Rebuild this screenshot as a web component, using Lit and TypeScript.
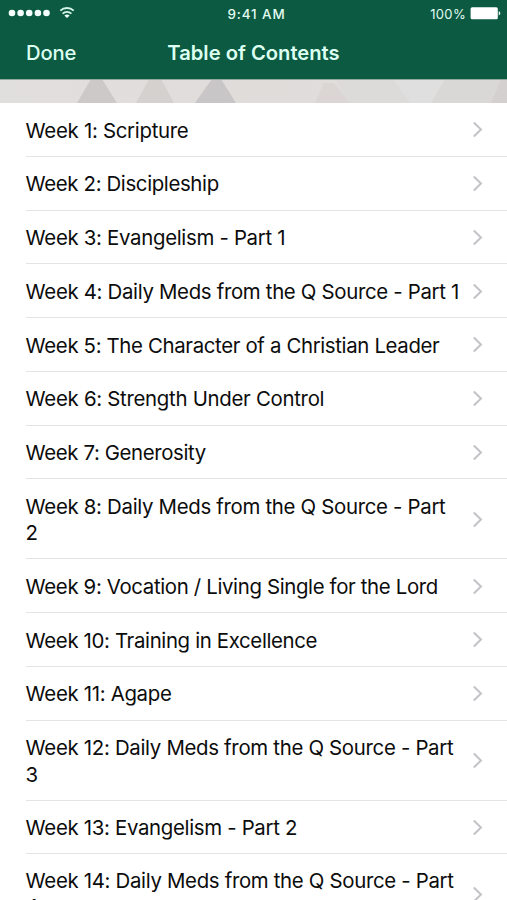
import { LitElement, html, css, svg } from "lit";
import { customElement, property } from "lit/decorators.js";

interface Chapter {
  label: string;
  tracking: number;
  leading?: number;
  inset?: number;
  twoLine?: boolean;
}

const chapters: Chapter[] = [
  { label: "Week 1: Scripture", tracking: -0.29 },
  { label: "Week 2: Discipleship", tracking: -0.36 },
  { label: "Week 3: Evangelism - Part 1", tracking: -0.31 },
  { label: "Week 4: Daily Meds from the Q Source - Part 1", tracking: -0.32 },
  { label: "Week 5: The Character of a Christian Leader", tracking: -0.35 },
  { label: "Week 6: Strength Under Control", tracking: -0.29 },
  { label: "Week 7: Generosity", tracking: -0.38 },
  { label: "Week 8: Daily Meds from the Q Source - Part\n2", tracking: -0.31, twoLine: true },
  { label: "Week 9: Vocation / Living Single for the Lord", tracking: -0.35 },
  { label: "Week 10: Training in Excellence", tracking: -0.35 },
  { label: "Week 11: Agape", tracking: -0.32 },
  { label: "Week 12: Daily Meds from the Q Source - Part\n3", tracking: -0.31, twoLine: true },
  { label: "Week 13: Evangelism - Part 2", tracking: -0.32 },
  { label: "Week 14: Daily Meds from the Q Source - Part\n4", tracking: -0.32, leading: 26, inset: 1, twoLine: true },
];

@customElement("status-bar")
export class StatusBar extends LitElement {
  static styles = css`
    :host {
      display: grid;
      grid-template-columns: 1fr auto 1fr;
      align-items: center;
      height: 26px;
      padding: 0 6px 0 8px;
      color: #e2fbf1;
      font-size: 13px;
    }
    .left,
    .right {
      display: flex;
      align-items: center;
    }
    .right {
      justify-content: flex-end;
      gap: 4px;
      letter-spacing: 0.35px;
    }
    .time {
      font-size: 13.4px;
      font-weight: 500;
      letter-spacing: 0.9px;
      padding: 2px 0 0 4px;
    }
    .percent {
      padding-top: 2px;
    }
    svg {
      display: block;
    }
  `;

  render() {
    return html`
      <div class="left">
        <svg width="70" height="26" viewBox="0 0 70 26">
          ${[4, 12.6, 21.2, 29.9, 38.5].map(
            (x) => svg`<circle cx=${x} cy="13" r="3.3" fill="#f4fffb"></circle>`
          )}
          <g fill="none" stroke="#d8f5e9" stroke-width="1.8">
            <path d="M52.3 10.7a9.6 9.6 0 0 1 13.4 0"></path>
            <path d="M54.6 13.6a6.3 6.3 0 0 1 8.8 0"></path>
          </g>
          <path d="M56.4 15.6a3.8 3.8 0 0 1 5.2 0L59 18.1z" fill="#f0fff9"></path>
        </svg>
      </div>
      <div class="time">9:41 AM</div>
      <div class="right">
        <span class="percent">100%</span>
        <svg width="31" height="26" viewBox="0 0 31 26">
          <rect x="0.6" y="7.3" width="27.2" height="12" rx="1.5" fill="#fff"></rect>
          <path d="M28.7 11.3c2.2.5 2.2 3.6 0 4.1z" fill="#e0f5ec"></path>
        </svg>
      </div>
    `;
  }
}

@customElement("chapter-row")
export class ChapterRow extends LitElement {
  @property({ attribute: false }) chapter!: Chapter;

  static styles = css`
    :host {
      display: block;
      padding-left: 25.6px;
    }
    .row {
      box-sizing: border-box;
      height: 53.75px;
      display: flex;
      align-items: center;
      justify-content: space-between;
      padding-right: 23px;
      border-bottom: 1px solid #e4e4e6;
    }
    .tall {
      height: 80px;
    }
    .label {
      font-size: 20.4px;
      color: #0c0c0c;
      white-space: pre;
    }
    svg {
      flex: none;
      display: block;
      margin-left: -20px;
    }
  `;

  render() {
    const { label, tracking, twoLine, leading = 26.6, inset = 3.2 } = this.chapter;
    return html`
      <div class="row ${twoLine ? "tall" : ""}">
        <span
          class="label"
          style="letter-spacing:${tracking}px;line-height:${leading}px;padding-top:${inset}px"
          >${label}</span
        >
        <svg width="12" height="18" viewBox="0 0 12 18">
          <path d="M1.8 2.5l7.2 7-7.2 7" fill="none" stroke="#c3c3c7" stroke-width="2"></path>
        </svg>
      </div>
    `;
  }
}

@customElement("app-root")
export class AppRoot extends LitElement {
  static styles = css`
    :host {
      display: flex;
      flex-direction: column;
      height: 900px;
      overflow: hidden;
      background: #fff;
      font-family: Inter, "Liberation Sans", sans-serif;
    }
    header {
      flex: none;
      height: 79px;
      background: #0b5a41;
    }
    .nav {
      display: grid;
      grid-template-columns: 1fr auto 1fr;
      align-items: center;
      height: 53px;
      padding: 0 26px;
      color: #dcfff1;
      font-size: 20.2px;
    }
    .done {
      font-weight: 500;
      letter-spacing: -0.15px;
    }
    .title {
      font-weight: 600;
      letter-spacing: 0;
    }
    .banner {
      flex: none;
      display: block;
    }
    .list {
      flex: 1;
      min-height: 0;
      overflow: hidden;
    }
  `;

  render() {
    return html`
      <header>
        <status-bar></status-bar>
        <div class="nav">
          <span class="done">Done</span>
          <span class="title">Table of Contents</span>
        </div>
      </header>
      <svg class="banner" width="507" height="24" viewBox="0 0 507 24">
        <defs>
          <linearGradient id="base">
            <stop offset="0" stop-color="#e1dfde"></stop>
            <stop offset="0.5" stop-color="#e0dcda"></stop>
            <stop offset="1" stop-color="#e0dedd"></stop>
          </linearGradient>
        </defs>
        <rect width="507" height="24" fill="url(#base)"></rect>
        <path d="M91 0h11l15 24H77z" fill="#cdc9c8"></path>
        <path d="M149 0h12l13 24H136z" fill="#d5d1ce"></path>
        <path d="M212 0h9l15 24h-41z" fill="#c8c6c6"></path>
        <path d="M324 4h10l16 20h-35z" fill="#dbd5d3"></path>
        <path d="M335 0h58l17 24h-60z" fill="#dddbda"></path>
        <path d="M393 0h52l-14 24h-21z" fill="#e0dfdf"></path>
        <path d="M445 0h56l-10 24h-60z" fill="#dad8d7"></path>
        <path d="M501 0h6v24h-16z" fill="#d3d0cf"></path>
        <rect width="507" height="1" fill="#8fa99d"></rect>
      </svg>
      <div class="list">
        ${chapters.map((c) => html`<chapter-row .chapter=${c}></chapter-row>`)}
      </div>
    `;
  }
}
